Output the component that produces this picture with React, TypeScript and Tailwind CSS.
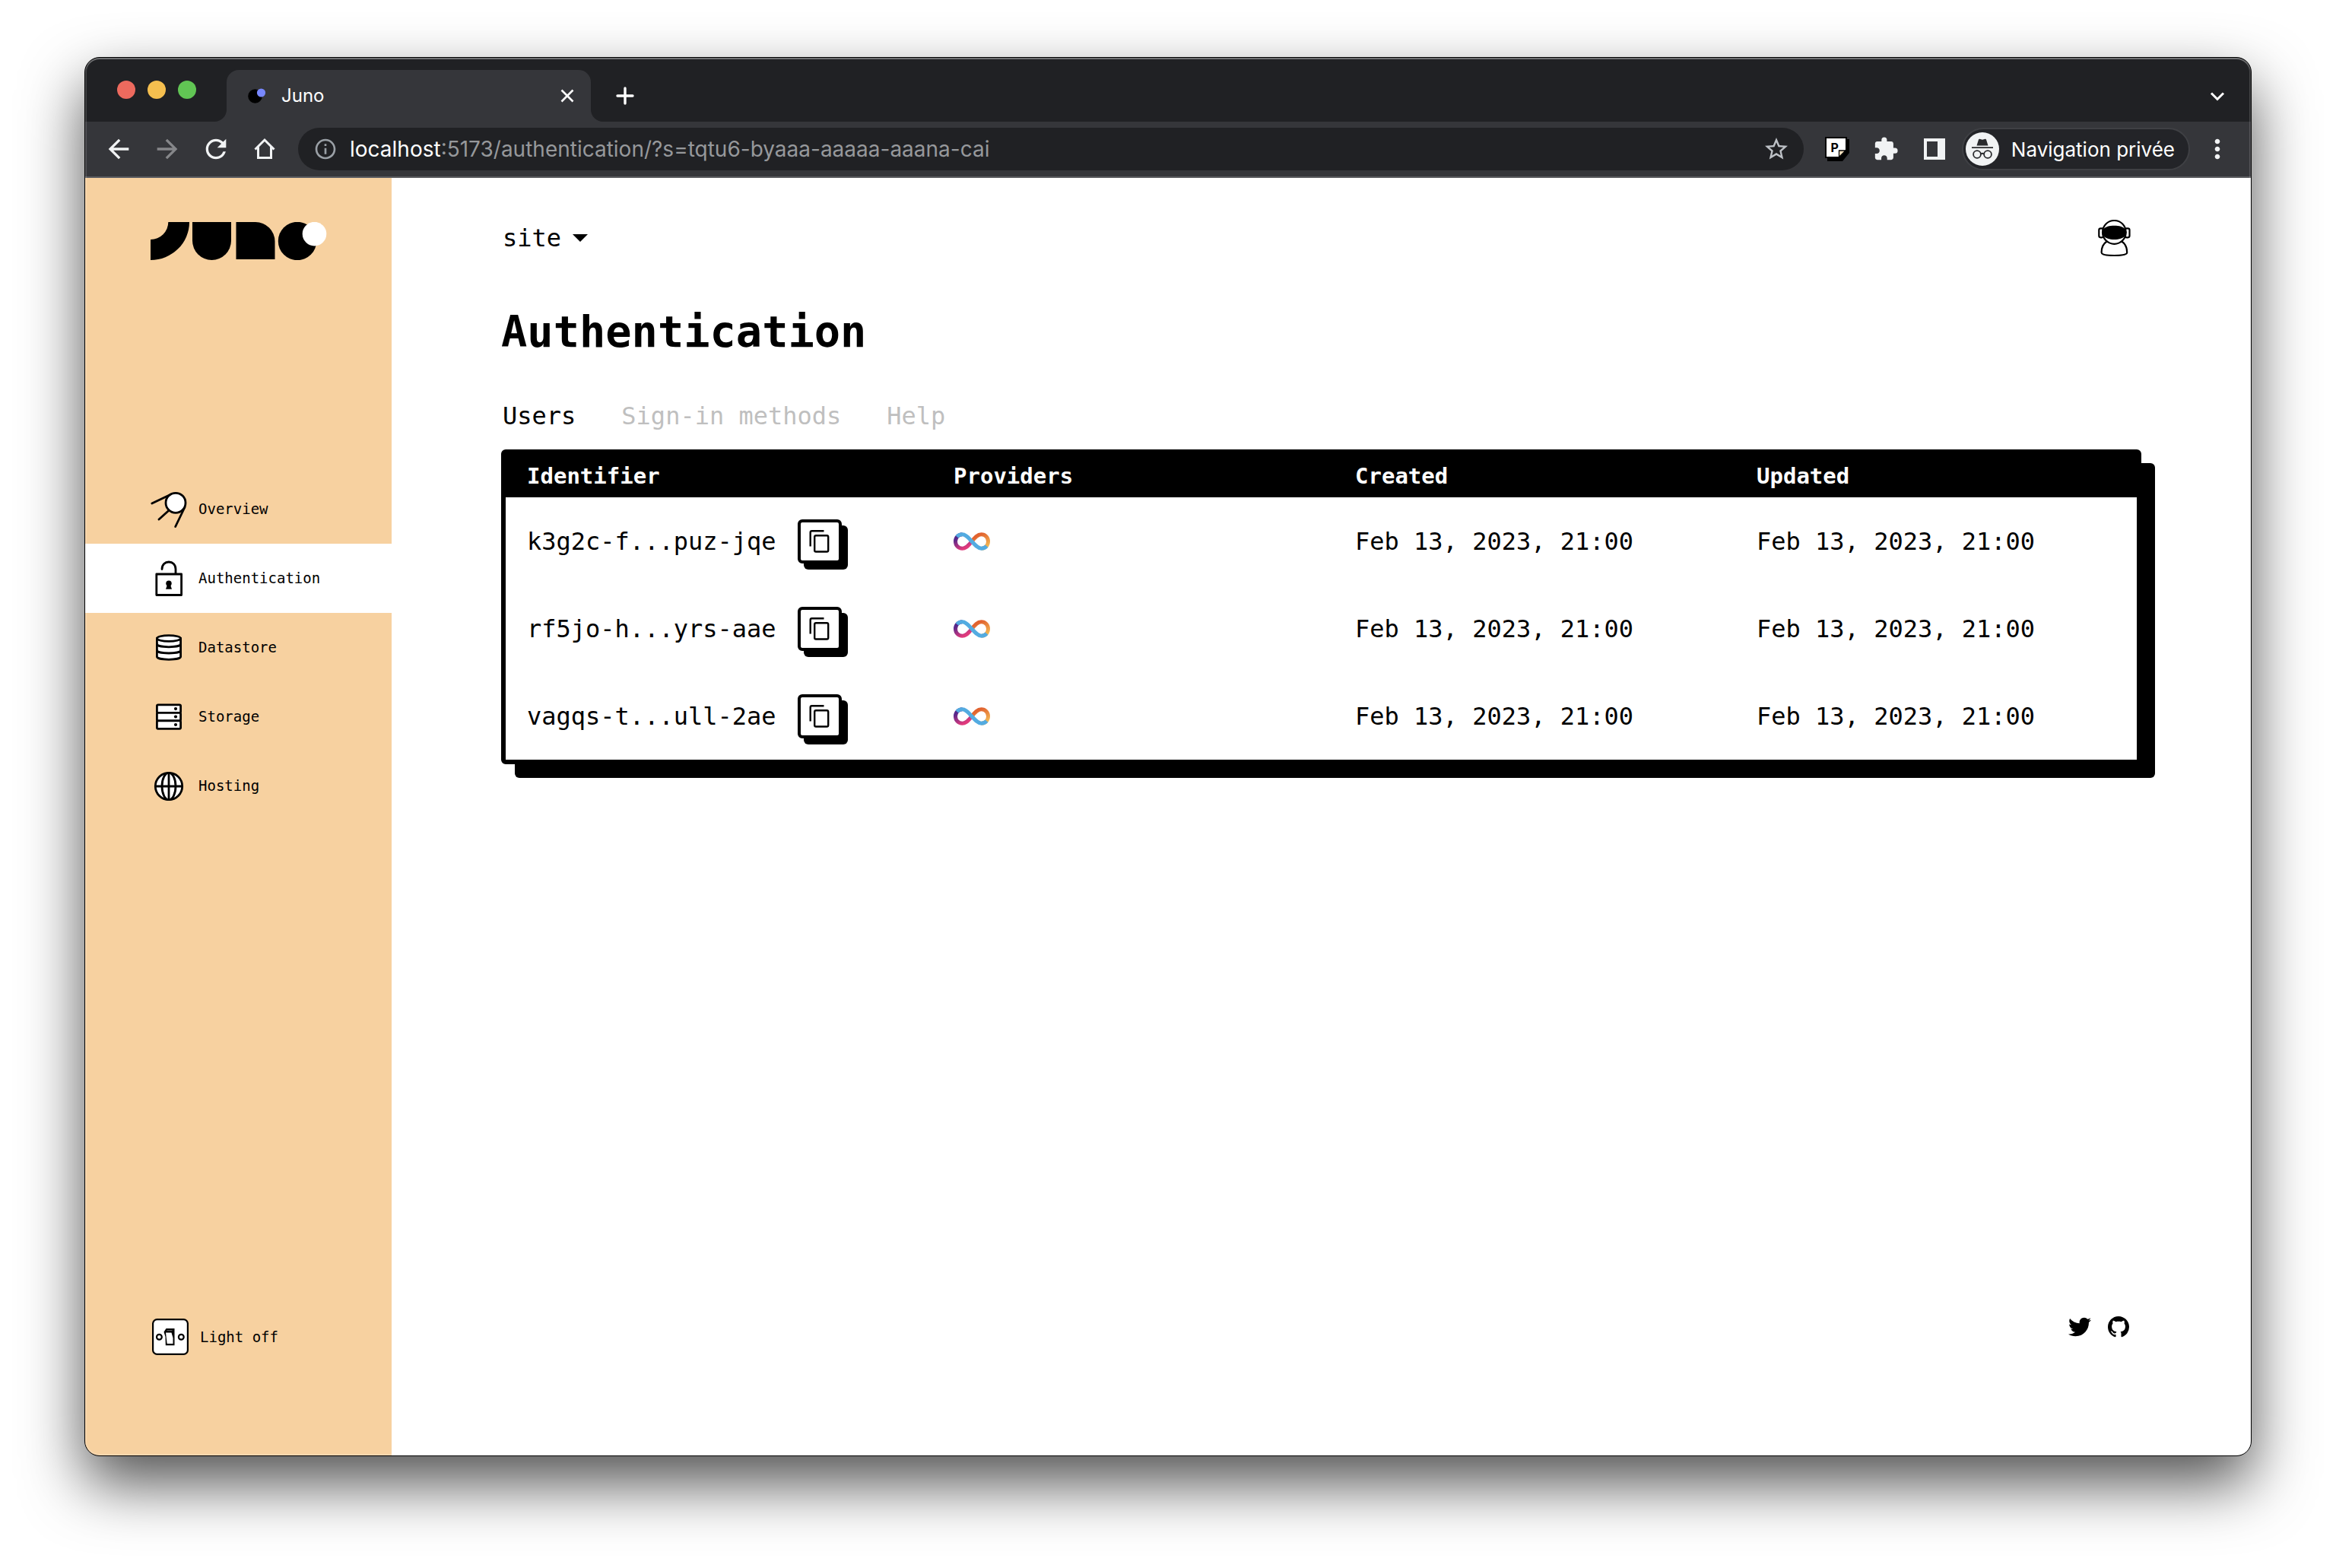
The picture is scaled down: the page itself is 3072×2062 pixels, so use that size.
import type { ReactNode } from "react";
import {
  MdArrowBack,
  MdArrowForward,
  MdExtension,
  MdInfoOutline,
  MdMoreVert,
  MdRefresh,
  MdStarBorder,
} from "react-icons/md";
import { FaTwitter } from "react-icons/fa";

/* ---------- Browser chrome icons ---------- */

function Favicon() {
  return (
    <svg viewBox="0 0 24 20" className="h-5 w-6" aria-hidden="true">
      <circle cx="9.5" cy="10.5" r="9.3" fill="#000" />
      <circle cx="17.5" cy="6" r="5.6" fill="#7888ff" />
    </svg>
  );
}

function HomeIcon() {
  return (
    <svg viewBox="0 0 40 40" className="size-10" fill="none" stroke="currentColor" strokeWidth="3" aria-hidden="true">
      <path d="M7.5 20.5 20 8l12.500 12.500M11.500 17.500V31.500h17V17.500" strokeLinejoin="miter" />
    </svg>
  );
}

function NoteIcon() {
  return (
    <svg viewBox="0 0 40 40" className="size-10" aria-hidden="true">
      <path d="M7 7h29v18l-9 11H7z" fill="#000" />
      <path d="M4 4h29v18l-10 10H4z" fill="#000" />
      <path d="M6 6h25v15l-8.500 9H6z" fill="#fff" />
      <path d="M22.500 30.500V22h8.500z" fill="#fbe3c0" stroke="#000" strokeWidth="1.300" />
      <text x="11.500" y="24" className="text-[16px] font-bold" fill="#000">
        P
      </text>
    </svg>
  );
}

function SidePanelIcon() {
  return (
    <svg viewBox="0 0 40 40" className="size-10" aria-hidden="true">
      <path fillRule="evenodd" d="M6 6h28v28H6zM10 10v20h14V10z" fill="currentColor" />
    </svg>
  );
}

function IncognitoIcon() {
  return (
    <svg viewBox="0 0 44 44" className="size-11" aria-hidden="true">
      <circle cx="22" cy="22" r="22" fill="#f1f3f4" />
      <path d="M14.500 17.500 17 9.500q.5-1 1.500-.7l3.500 1 3.500-1q1-.3 1.500.7l2.500 8z" fill="#292a2d" />
      <path d="M8 20.200h28" stroke="#292a2d" strokeWidth="1.800" />
      <g fill="none" stroke="#292a2d" strokeWidth="1.800">
        <circle cx="15" cy="29" r="4.900" />
        <circle cx="29" cy="29" r="4.900" />
        <path d="M19.900 28.500q2.100-1.500 4.200 0" />
      </g>
    </svg>
  );
}

/* ---------- Application icons ---------- */

function JunoLogo() {
  return (
    <svg viewBox="0 0 232 50" className="h-[50px] w-[232px]" role="img" aria-label="Juno">
      <path d="M23.300 0H51A51 50 0 0 1 0 50V23A23.300 23 0 0 0 23.300 0Z" />
      <path d="M55 0h51v24.500a25.500 25.500 0 0 1-51 0Z" />
      <path d="M112.500 0H138a25.500 25.500 0 0 1 25.500 25.500V49h-51Z" />
      <circle cx="193" cy="25" r="25.200" />
      <circle cx="215.500" cy="15.600" r="15.800" fill="#fff" />
    </svg>
  );
}

function NavSvg({ children }: { children: ReactNode }) {
  return (
    <svg
      viewBox="0 0 48 48"
      className="size-12 shrink-0"
      fill="#fff"
      stroke="#000"
      strokeWidth="2.800"
      strokeLinecap="round"
      strokeLinejoin="round"
      aria-hidden="true"
    >
      {children}
    </svg>
  );
}

function SatelliteIcon() {
  return (
    <NavSvg>
      <path d="M1.800 16 27 4M11 37l12.500-11.300M32.700 46.500 45 21" />
      <circle cx="33" cy="15.300" r="13" />
    </NavSvg>
  );
}

function PadlockIcon() {
  return (
    <NavSvg>
      <path d="M15 11.500C15 5.500 19 2 24 2s9 3.500 9 9.500V18" fill="none" />
      <rect x="7.800" y="18" width="32.800" height="27.500" />
      <circle cx="24" cy="30.300" r="3.700" fill="#000" stroke="none" />
      <path d="M22 32h4l2 5.700h-8z" fill="#000" stroke="none" />
    </NavSvg>
  );
}

function DatabaseIcon() {
  return (
    <NavSvg>
      <path d="M8.400 11.500v24c0 2.200 7 3.800 15.600 3.800s15.600-1.600 15.600-3.800v-24" />
      <path d="M8.400 19c0 2.200 7 3.800 15.600 3.800s15.600-1.600 15.600-3.800M8.400 27.200c0 2.200 7 3.800 15.600 3.800s15.600-1.600 15.600-3.800" fill="none" />
      <ellipse cx="24" cy="11.500" rx="15.600" ry="3.900" />
    </NavSvg>
  );
}

function ServerIcon() {
  return (
    <NavSvg>
      <rect x="8.400" y="7.800" width="31.200" height="10.500" rx="1.500" />
      <rect x="8.400" y="18.300" width="31.200" height="10.500" rx="1.500" />
      <rect x="8.400" y="28.800" width="31.200" height="10.500" rx="1.500" />
      <g fill="#000" stroke="none">
        <circle cx="33" cy="13.100" r="2.100" />
        <circle cx="33" cy="23.500" r="2.100" />
        <circle cx="33" cy="34" r="2.100" />
      </g>
    </NavSvg>
  );
}

function GlobeIcon() {
  return (
    <NavSvg>
      <circle cx="24" cy="24" r="17.700" />
      <ellipse cx="24" cy="24" rx="9" ry="17.700" />
      <path d="M24 6.300v35.400M6.300 24h35.400" />
    </NavSvg>
  );
}

function LightSwitchIcon() {
  return (
    <svg viewBox="0 0 48 48" className="size-12 shrink-0" fill="#fff" stroke="#000" strokeWidth="2.200" aria-hidden="true">
      <rect x="1.100" y="1.100" width="45.800" height="45.800" rx="5.500" />
      <circle cx="9.400" cy="24.200" r="3.400" />
      <circle cx="38.300" cy="24.200" r="3.400" />
      <path d="M15.500 17.500 18.500 13H29.500V35.200H17.800L17.500 24z" fill="#000" stroke="none" />
      <path d="M18 18.500h7.500l2 7V33h-7.800z" stroke="none" />
      <path d="M19.500 15.700h7" stroke="#777" strokeWidth="1" />
    </svg>
  );
}

function AstronautIcon() {
  return (
    <svg viewBox="0 0 48 48" className="size-12" fill="#fff" stroke="#000" strokeWidth="2.200" aria-hidden="true">
      <path d="M14.500 28.500C10 31.500 7.600 37 7.600 43c0 2.600 6 4 16.800 4s16.800-1.400 16.800-4c0-6-2.400-11.500-6.900-14.500z" />
      <rect x="4.300" y="11.300" width="6" height="12" rx="2.200" />
      <rect x="38.500" y="11.300" width="6" height="12" rx="2.200" />
      <ellipse cx="24.400" cy="16.400" rx="15.400" ry="15.400" />
      <path d="M9.800 12.500C13 9 18 7.800 24.400 7.800S35.800 9 39 12.500v8.500c-3.200 3.500-8.200 5-14.600 5s-11.400-1.500-14.600-5z" fill="#000" stroke="none" />
    </svg>
  );
}

function CopyIcon() {
  return (
    <svg viewBox="0 0 50 50" className="size-full" fill="none" stroke="#000" strokeWidth="2.400" aria-hidden="true">
      <rect x="18.200" y="17.200" width="18" height="21.300" rx="1.800" />
      <path d="M12.700 31.500V13.300q0-2 2-2H30.500" />
    </svg>
  );
}

function InfinityLogo() {
  return (
    <svg viewBox="0 0 48 24" className="h-6 w-12" fill="none" strokeWidth="5" role="img" aria-label="Internet Identity">
      <defs>
        <linearGradient id="warm" x1="0.500" y1="0" x2="1" y2="0.800">
          <stop offset="0" stopColor="#e1622f" />
          <stop offset="1" stopColor="#f3b652" />
        </linearGradient>
        <linearGradient id="violet" x1="0" y1="0.200" x2="0.500" y2="1">
          <stop offset="0.100" stopColor="#54278a" />
          <stop offset="1" stopColor="#e03a7c" />
        </linearGradient>
      </defs>
      <path
        d="M24 12c4-5 7.500-9.200 12.500-9.200 5.300 0 9 4 9 9.200 0 5-3.700 9.200-9 9.200"
        stroke="url(#warm)"
      />
      <path
        d="M24 12c-4 5-7.500 9.200-12.500 9.200-5.300 0-9-4-9-9.200 0-5 3.700-9.200 9-9.200"
        stroke="url(#violet)"
      />
      <path
        d="M4.500 5.800c1.700-2 4.200-3 7-3 8.500 0 16.500 18.400 25 18.400 2.800 0 5.300-1 7-3"
        stroke="#53abe1"
      />
    </svg>
  );
}

function GithubIcon() {
  return (
    <svg viewBox="0 0 16 16" className="size-7" aria-hidden="true">
      <path
        fillRule="evenodd"
        d="M8 0C3.580 0 0 3.580 0 8c0 3.540 2.290 6.530 5.470 7.590.4.070.55-.17.55-.38 0-.19-.01-.82-.01-1.490-2.010.37-2.530-.49-2.690-.94-.09-.23-.48-.94-.82-1.130-.28-.15-.68-.52-.01-.53.63-.01 1.080.58 1.230.82.72 1.210 1.870.87 2.330.66.070-.52.28-.87.51-1.070-1.780-.2-3.640-.89-3.640-3.950 0-.87.31-1.590.82-2.150-.08-.2-.36-1.020.08-2.120 0 0 .67-.21 2.200.82.64-.18 1.320-.27 2-.27.68 0 1.360.09 2 .27 1.530-1.040 2.200-.82 2.200-.82.44 1.100.16 1.920.08 2.120.51.56.82 1.270.82 2.150 0 3.070-1.870 3.750-3.650 3.950.29.25.54.73.54 1.480 0 1.070-.01 1.930-.01 2.200 0 .21.15.46.55.38A8.013 8.013 0 0 0 16 8c0-4.420-3.580-8-8-8z"
      />
    </svg>
  );
}

/* ---------- Browser frame ---------- */

function TabFoot({ side }: { side: "left" | "right" }) {
  return (
    <svg
      viewBox="0 0 16 16"
      className={
        side === "left"
          ? "absolute bottom-0 -left-4 size-4 text-[#35363a]"
          : "absolute -right-4 bottom-0 size-4 text-[#35363a]"
      }
      fill="currentColor"
      aria-hidden="true"
    >
      <path d={side === "left" ? "M16 0v16H0A16 16 0 0 0 16 0Z" : "M0 0v16h16A16 16 0 0 1 0 0Z"} />
    </svg>
  );
}

function TabStrip() {
  return (
    <div className="flex h-[84px] items-center bg-[#202124] pr-[30px] pl-[42px] text-white">
      <div className="flex gap-4">
        <button aria-label="Close window" className="size-6 rounded-full bg-[#ed6a5e]" />
        <button aria-label="Minimize window" className="size-6 rounded-full bg-[#f5bf4f]" />
        <button aria-label="Zoom window" className="size-6 rounded-full bg-[#61c554]" />
      </div>
      <div className="ml-10 flex h-[68px] flex-1 items-center self-end">
        <div className="relative flex h-full w-[479px] items-center rounded-t-2xl bg-[#35363a] pr-[19px] pl-7">
          <TabFoot side="left" />
          <TabFoot side="right" />
          <Favicon />
          <span className="ml-5 flex-1 text-2xl">Juno</span>
          <button aria-label="Close tab">
            <svg viewBox="0 0 24 24" className="size-6" stroke="currentColor" strokeWidth="2.600" aria-hidden="true">
              <path d="m4.500 4.500 15 15m0-15-15 15" />
            </svg>
          </button>
        </div>
        <button aria-label="New tab" className="ml-8">
          <svg viewBox="0 0 26 26" className="size-[26px]" stroke="currentColor" strokeWidth="3.400" strokeLinecap="round" aria-hidden="true">
            <path d="M13 3v20M3 13h20" />
          </svg>
        </button>
        <button aria-label="Search tabs" className="ml-auto">
          <svg viewBox="0 0 28 28" className="size-7" fill="none" stroke="currentColor" strokeWidth="3" aria-hidden="true">
            <path d="m6 10.500 8 8 8-8" />
          </svg>
        </button>
      </div>
    </div>
  );
}

function Toolbar() {
  return (
    <div className="flex h-[74px] items-center gap-6 border-b-2 border-[#5c5d61] bg-[#35363a] px-6 text-[#f1f3f4]">
      <button aria-label="Back">
        <MdArrowBack className="size-10" />
      </button>
      <button aria-label="Forward" className="text-[#86878a]">
        <MdArrowForward className="size-10" />
      </button>
      <button aria-label="Reload">
        <MdRefresh className="size-10" />
      </button>
      <button aria-label="Home">
        <HomeIcon />
      </button>
      <div className="flex h-14 min-w-0 flex-1 items-center rounded-full bg-[#202124] pr-[18px] pl-5 text-[28px]">
        <MdInfoOutline className="size-8 shrink-0 text-[#9aa0a6]" />
        <label htmlFor="address" className="ml-4 text-white">
          localhost
        </label>
        <input
          id="address"
          type="text"
          defaultValue=":5173/authentication/?s=tqtu6-byaaa-aaaaa-aaana-cai"
          className="min-w-0 flex-1 bg-transparent text-[#96989b] outline-none"
        />
        <button aria-label="Bookmark this page" className="text-[#bdc1c6]">
          <MdStarBorder className="size-9" />
        </button>
      </div>
      <button aria-label="Notes extension">
        <NoteIcon />
      </button>
      <button aria-label="Extensions" className="flex size-10 items-center justify-center">
        <MdExtension className="size-[34px]" />
      </button>
      <div className="flex items-center gap-4">
        <button aria-label="Side panel">
          <SidePanelIcon />
        </button>
        <button className="flex h-14 items-center gap-4 rounded-full border-2 border-[#3f4044] bg-[#232428] pr-[18px] pl-[3px] text-[26px] text-white">
          <IncognitoIcon />
          Navigation privée
        </button>
        <button aria-label="Menu">
          <MdMoreVert className="size-10" />
        </button>
      </div>
    </div>
  );
}

/* ---------- Application ---------- */

const navItems = [
  { label: "Overview", icon: <SatelliteIcon />, active: false },
  { label: "Authentication", icon: <PadlockIcon />, active: true },
  { label: "Datastore", icon: <DatabaseIcon />, active: false },
  { label: "Storage", icon: <ServerIcon />, active: false },
  { label: "Hosting", icon: <GlobeIcon />, active: false },
];

function Sidebar() {
  return (
    <aside className="flex w-[403px] shrink-0 flex-col bg-[#f7d1a0] pt-[58px] pb-[132px] text-[19px]">
      <a href="#home" className="ml-[86px]">
        <JunoLogo />
      </a>
      <nav className="mt-[282px] flex flex-col">
        {navItems.map((item) => (
          <a
            key={item.label}
            href={"#" + item.label.toLowerCase()}
            aria-current={item.active ? "page" : undefined}
            className={
              item.active
                ? "flex h-[91px] items-center gap-[15px] bg-white pl-[86px]"
                : "flex h-[91px] items-center gap-[15px] pl-[86px]"
            }
          >
            {item.icon}
            {item.label}
          </a>
        ))}
      </nav>
      <button className="mt-auto flex items-center gap-[15px] pl-[88px]">
        <LightSwitchIcon />
        Light off
      </button>
    </aside>
  );
}

const users = [
  { id: "k3g2c-f...puz-jqe", created: "Feb 13, 2023, 21:00", updated: "Feb 13, 2023, 21:00" },
  { id: "rf5jo-h...yrs-aae", created: "Feb 13, 2023, 21:00", updated: "Feb 13, 2023, 21:00" },
  { id: "vagqs-t...ull-2ae", created: "Feb 13, 2023, 21:00", updated: "Feb 13, 2023, 21:00" },
];

function UsersTable() {
  return (
    <div className="mt-6 rounded-md border-[6px] border-black bg-white shadow-[18px_18px_0_0_#000]">
      <table className="w-full table-fixed text-left">
        <thead className="bg-black text-[29px] text-white">
          <tr className="h-[57px]">
            <th className="w-[561px] pl-7">Identifier</th>
            <th className="pl-7">Providers</th>
            <th className="pl-7">Created</th>
            <th className="pl-7">Updated</th>
          </tr>
        </thead>
        <tbody>
          {users.map((user) => (
            <tr key={user.id} className="h-[115px]">
              <td className="pl-7">
                <div className="flex items-center gap-7">
                  {user.id}
                  <button
                    aria-label={"Copy identifier " + user.id}
                    className="size-[58px] rounded-md border-4 border-black bg-white shadow-[8px_8px_0_0_#000]"
                  >
                    <CopyIcon />
                  </button>
                </div>
              </td>
              <td className="pl-7">
                <InfinityLogo />
              </td>
              <td className="pl-7">{user.created}</td>
              <td className="pl-7">{user.updated}</td>
            </tr>
          ))}
        </tbody>
      </table>
    </div>
  );
}

function Content() {
  return (
    <main className="flex min-w-0 flex-1 flex-col bg-white px-36 pt-[55px] text-[32px] leading-10">
      <header className="flex h-12 items-center justify-between pr-3">
        <div className="relative flex items-center">
          <select aria-label="Satellite" className="appearance-none bg-transparent pr-10 pl-0.5">
            <option>site</option>
          </select>
          <svg viewBox="0 0 20 10" className="pointer-events-none absolute right-1.5 h-2.5 w-5" aria-hidden="true">
            <path d="M0 0h20L10 10z" />
          </svg>
        </div>
        <button aria-label="Account">
          <AstronautIcon />
        </button>
      </header>
      <h1 className="mt-[67px] text-[57px] leading-16 font-bold">Authentication</h1>
      <div role="tablist" className="mt-[59px] flex gap-[60px] pl-0.5 text-[#bfbfbf]">
        <button role="tab" aria-selected="true" className="text-black">
          Users
        </button>
        <button role="tab" aria-selected="false">
          Sign-in methods
        </button>
        <button role="tab" aria-selected="false">
          Help
        </button>
      </div>
      <UsersTable />
      <footer className="mt-auto flex items-center justify-end gap-[22px] pr-4 pb-[154px]">
        <a href="#twitter" aria-label="Twitter">
          <FaTwitter className="size-[30px]" />
        </a>
        <a href="#github" aria-label="GitHub">
          <GithubIcon />
        </a>
      </footer>
    </main>
  );
}

export default function App() {
  return (
    <div className="flex min-h-screen bg-white px-[111px] pt-[75px] pb-[147px] text-black">
      <div className="relative flex min-w-0 flex-1 flex-col overflow-hidden rounded-[20px] border border-black bg-[#35363a] font-['Inter','Liberation_Sans',sans-serif] shadow-[0_36px_80px_0_rgba(0,0,0,0.68)]">
        <TabStrip />
        <Toolbar />
        <div className="flex flex-1 font-['DejaVu_Sans_Mono','Liberation_Mono',monospace]">
          <Sidebar />
          <Content />
        </div>
        <div className="pointer-events-none absolute inset-0 rounded-[19px] shadow-[inset_0_2px_0_0_rgba(255,255,255,0.25),inset_0_0_0_2px_rgba(255,255,255,0.15)]" />
      </div>
    </div>
  );
}
